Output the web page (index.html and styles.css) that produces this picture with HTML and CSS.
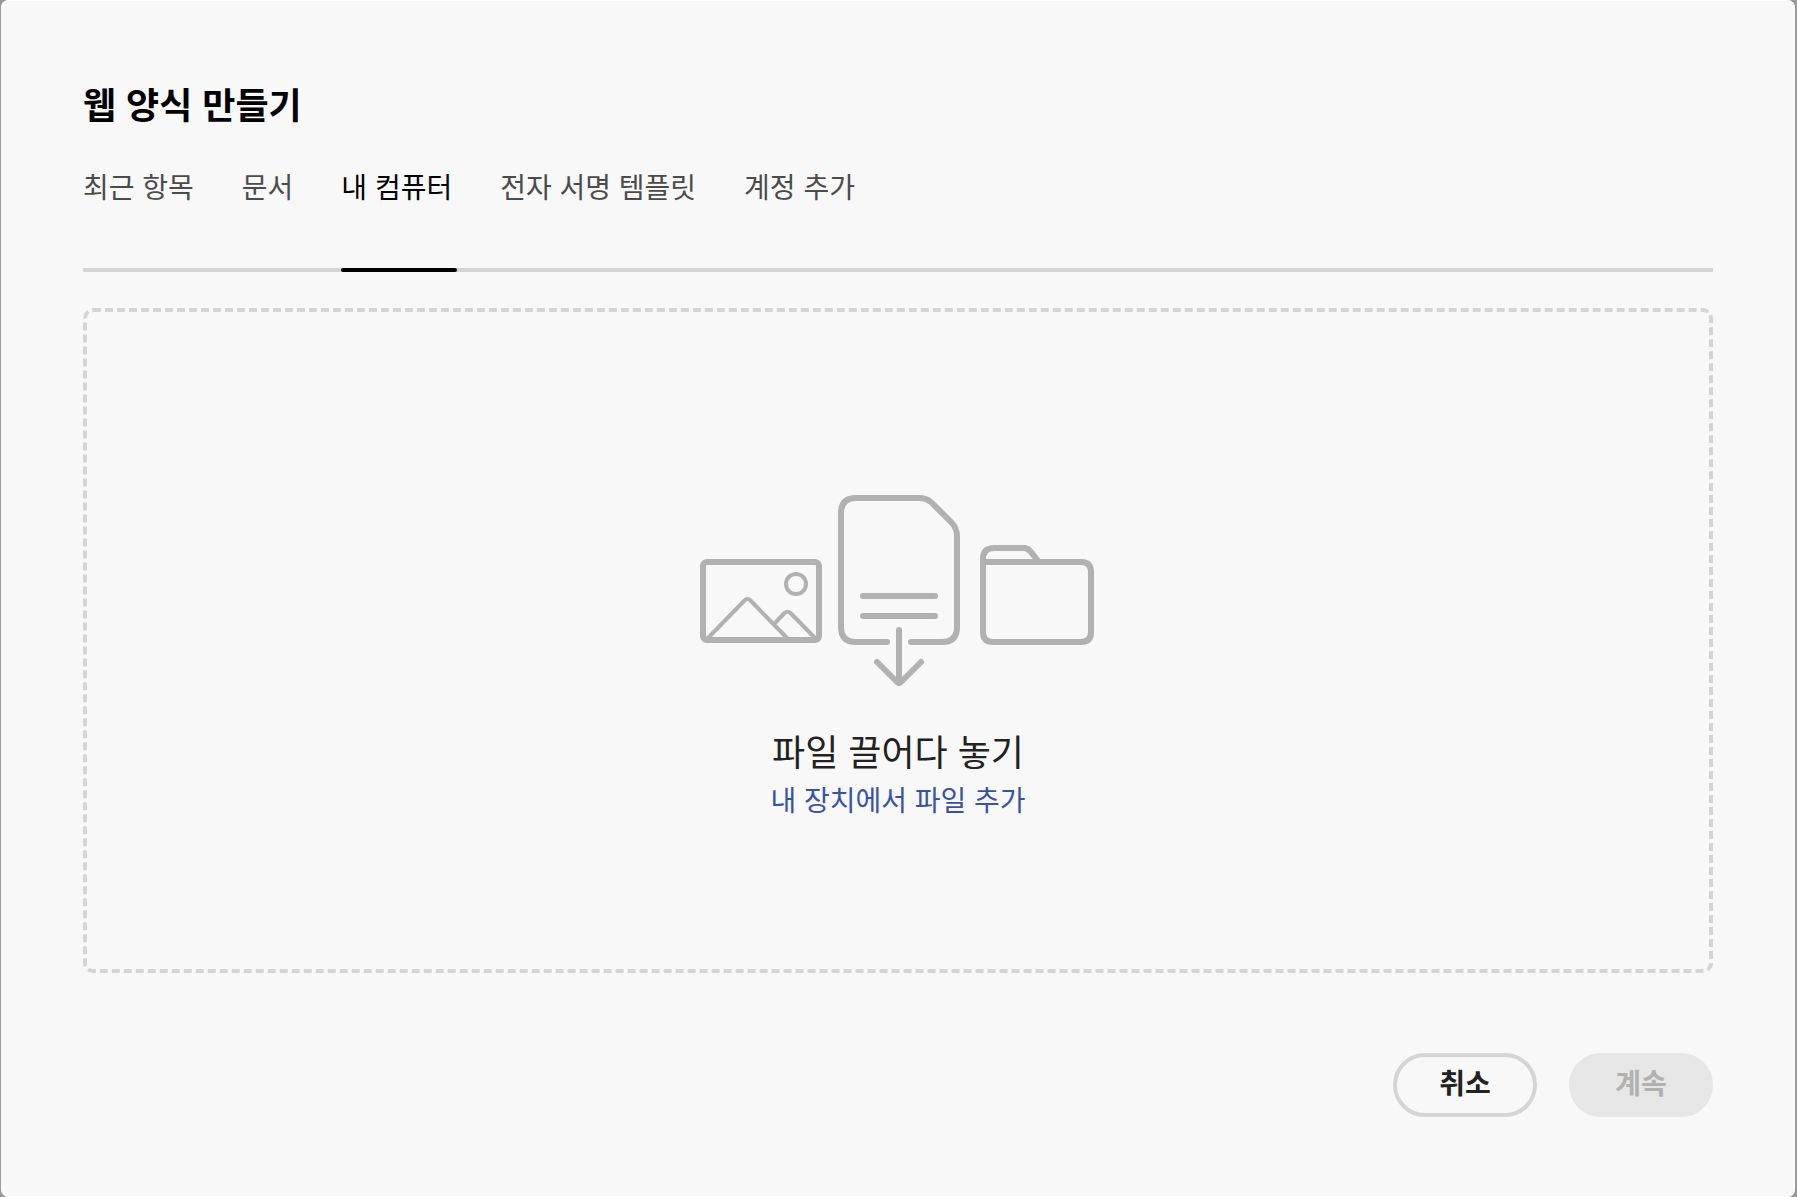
FILE: index.html
```html
<!DOCTYPE html>
<html lang="ko">
<head>
    <meta charset="UTF-8">
    <meta name="viewport" content="width=device-width, initial-scale=1.0">
    <title>웹 양식 만들기</title>
    <link rel="stylesheet" href="styles.css">
</head>
<body>
    <main class="dialog">
        <h1>웹 양식 만들기</h1>
        <nav class="tabs">
            <a href="#recent">최근 항목</a>
            <a href="#documents">문서</a>
            <a href="#computer" class="active" aria-current="page">내 컴퓨터</a>
            <a href="#templates">전자 서명 템플릿</a>
            <a href="#accounts">계정 추가</a>
        </nav>
        <section class="dropzone">
            <svg class="illustration" viewBox="0 0 396 192" aria-hidden="true">
                <!-- picture -->
                <rect x="3" y="67" width="116" height="78" rx="4" />
                <g class="thin">
                    <circle cx="96" cy="89" r="10" />
                    <path d="M7 144L44.500 105.500Q47.500 102.500 50.500 105.500L88 144" />
                    <path d="M74 129L84.500 118Q87.500 115.500 90.500 118L116 144" />
                </g>
                <!-- document -->
                <path d="M187 147H156Q141 147 141 132V18Q141 3 156 3H219Q226 3 231 7L251 27Q257 33 257 41V132Q257 147 242 147H211" />
                <path d="M163 101H235M163 121H235" />
                <path d="M199 135V187M177 167L197 187Q199 189 201 187L221 167" />
                <!-- folder -->
                <path d="M283 67H381Q391 67 391 77V137Q391 147 381 147H293Q283 147 283 137V64Q283 53 294 53H324Q328 53 331 57L338 66" />
            </svg>
            <p class="drop-title">파일 끌어다 놓기</p>
            <a href="#browse" class="browse">내 장치에서 파일 추가</a>
        </section>
        <footer>
            <button type="button" class="cancel">취소</button>
            <button type="button" class="continue" disabled>계속</button>
        </footer>
    </main>
</body>
</html>
```

FILE: styles.css
```css
* {
    box-sizing: border-box;
}
body {
    font-family: "Liberation Sans", "Noto Sans CJK KR", sans-serif;
    margin: 0;
    padding: 0 2px 0 1px;
    background-color: #999;
}
.dialog {
    display: flex;
    flex-direction: column;
    min-height: 100vh;
    padding: 83px 82px 80px;
    background-color: #f8f8f8;
    border-radius: 8px;
    box-shadow: inset 0 0 0 1px #fff;
}
h1 {
    margin: 0;
    font-size: 36px;
    line-height: 48px;
    font-weight: bold;
    color: #000;
}
.tabs {
    display: flex;
    gap: 48px;
    height: 141px;
    padding-top: 40px;
    border-bottom: 4px solid #d5d5d5;
}
.tabs a {
    position: relative;
    font-size: 28px;
    line-height: 36px;
    color: #4b4b4b;
    text-decoration: none;
    white-space: nowrap;
}
.tabs .active {
    color: #000;
}
.tabs .active::after {
    content: "";
    position: absolute;
    left: 0;
    right: -5px;
    bottom: -4px;
    height: 4px;
    border-radius: 2px;
    background-color: #000;
}
.dropzone {
    flex: 1;
    display: flex;
    flex-direction: column;
    align-items: center;
    justify-content: center;
    margin-top: 36px;
    padding-top: 34px;
    border: 4px dashed #d5d5d5;
    border-radius: 10px;
}
.illustration {
    width: 396px;
    height: 192px;
    fill: none;
    stroke: #b1b1b1;
    stroke-width: 6;
    stroke-linecap: round;
    stroke-linejoin: round;
}
.illustration .thin {
    stroke-width: 4;
}
.drop-title {
    margin: 43px 0 6px;
    font-size: 36px;
    line-height: 48px;
    color: #222;
}
.browse {
    font-size: 28px;
    line-height: 36px;
    color: #3853a4;
    text-decoration: none;
}
footer {
    display: flex;
    justify-content: flex-end;
    gap: 32px;
    margin-top: 80px;
}
button {
    min-width: 144px;
    height: 64px;
    padding: 0 32px;
    border: 4px solid #d5d5d5;
    border-radius: 32px;
    background-color: transparent;
    font-family: inherit;
    font-size: 28px;
    line-height: 36px;
    font-weight: bold;
    color: #222;
}
.continue {
    border-color: #e6e6e6;
    background-color: #e6e6e6;
    color: #b1b1b1;
}
```
